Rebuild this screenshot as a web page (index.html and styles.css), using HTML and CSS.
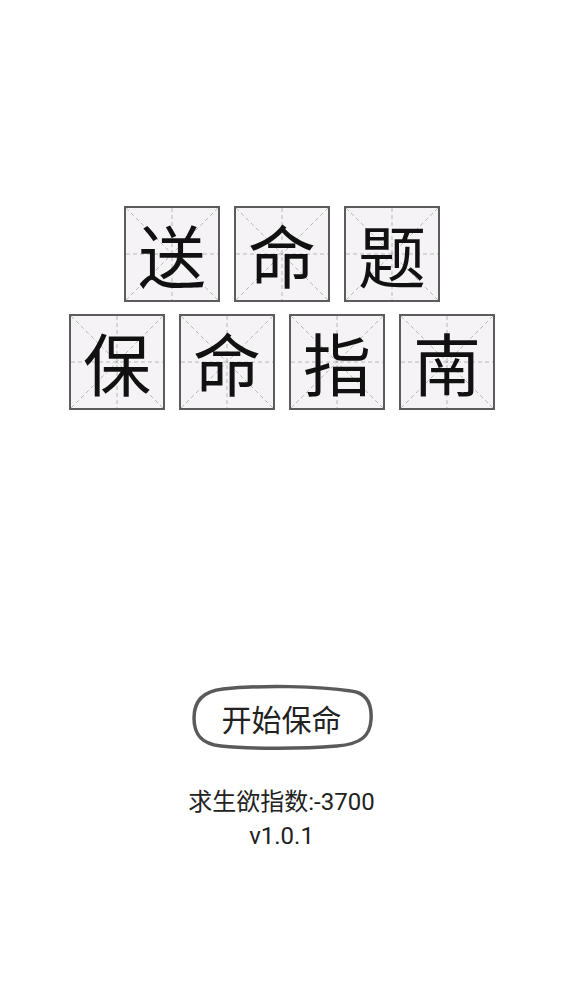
FILE: index.html
```html
<!doctype html>
<html lang="zh-CN">
  <head>
    <meta charset="UTF-8" />
    <meta name="viewport" content="width=device-width, initial-scale=1" />
    <link rel="stylesheet" href="styles.css">
  </head>
  <body class="l-page">
    <main class="title">
      <div class="title__row">
        <div class="cell"><svg class="cell__grid" viewBox="0 0 100 100" preserveAspectRatio="none"><path d="M0 50H100M50 0V100M0 0L100 100M100 0L0 100" /></svg><span class="cell__char">送</span></div>
        <div class="cell"><svg class="cell__grid" viewBox="0 0 100 100" preserveAspectRatio="none"><path d="M0 50H100M50 0V100M0 0L100 100M100 0L0 100" /></svg><span class="cell__char">命</span></div>
        <div class="cell"><svg class="cell__grid" viewBox="0 0 100 100" preserveAspectRatio="none"><path d="M0 50H100M50 0V100M0 0L100 100M100 0L0 100" /></svg><span class="cell__char">题</span></div>
      </div>
      <div class="title__row">
        <div class="cell"><svg class="cell__grid" viewBox="0 0 100 100" preserveAspectRatio="none"><path d="M0 50H100M50 0V100M0 0L100 100M100 0L0 100" /></svg><span class="cell__char">保</span></div>
        <div class="cell"><svg class="cell__grid" viewBox="0 0 100 100" preserveAspectRatio="none"><path d="M0 50H100M50 0V100M0 0L100 100M100 0L0 100" /></svg><span class="cell__char">命</span></div>
        <div class="cell"><svg class="cell__grid" viewBox="0 0 100 100" preserveAspectRatio="none"><path d="M0 50H100M50 0V100M0 0L100 100M100 0L0 100" /></svg><span class="cell__char">指</span></div>
        <div class="cell"><svg class="cell__grid" viewBox="0 0 100 100" preserveAspectRatio="none"><path d="M0 50H100M50 0V100M0 0L100 100M100 0L0 100" /></svg><span class="cell__char">南</span></div>
      </div>
    </main>

    <footer class="start">
      <button class="start__button">
        <svg class="start__ring" viewBox="0 0 182 66" preserveAspectRatio="none">
          <path d="M32 5C70 1 128 2 160 7C177 9 181 22 180 36C179 52 170 60 146 62C110 65 62 65 30 62C9 60 3 49 3 34C3 17 13 7 32 5Z" />
        </svg>
        <span class="start__label">开始保命</span>
      </button>
      <p class="start__score">求生欲指数:-3700</p>
      <p class="start__version">v1.0.1</p>
    </footer>
  </body>
</html>
```

FILE: styles.css
```css
html,
body {
  margin: 0;
  background: #fff;
}

.l-page {
  min-height: 1000px;
  font-family: Roboto, "Noto Sans CJK SC", sans-serif;
  color: #222;
}

.title {
  padding-top: 206px;
  display: flex;
  flex-direction: column;
  align-items: center;
  gap: 12px;
  padding-left: 1px;
}

.title__row {
  display: flex;
  gap: 14px;
}

.cell {
  position: relative;
  box-sizing: border-box;
  width: 96px;
  height: 96px;
  border: 2px solid #5c5c5c;
  background: #f5f3f5;
  display: flex;
  align-items: center;
  justify-content: center;
}

.cell__grid {
  position: absolute;
  inset: 0;
  width: 100%;
  height: 100%;
}

.cell__grid path {
  fill: none;
  stroke: #b8b6b8;
  stroke-width: 1;
  stroke-dasharray: 4 3;
  vector-effect: non-scaling-stroke;
}

.cell__char {
  position: relative;
  font-family: "Noto Sans CJK SC", sans-serif;
  font-size: 68px;
  line-height: 1;
  color: #111;
}

.start {
  margin-top: 274px;
  display: flex;
  flex-direction: column;
  align-items: center;
}

.start__button {
  position: relative;
  width: 182px;
  height: 66px;
  padding: 0;
  border: 0;
  background: none;
  display: flex;
  align-items: center;
  justify-content: center;
  cursor: pointer;
}

.start__ring {
  position: absolute;
  inset: 0;
  width: 100%;
  height: 100%;
}

.start__ring path {
  fill: #fff;
  stroke: #5a5a5a;
  stroke-width: 3.5;
}

.start__label {
  position: relative;
  font-family: "Noto Sans CJK SC", sans-serif;
  font-size: 30px;
  color: #222;
  margin-top: 2px;
}

.start__score,
.start__version {
  margin: 0;
  font-size: 24px;
  line-height: 34px;
}

.start__score {
  margin-top: 35px;
}
```
